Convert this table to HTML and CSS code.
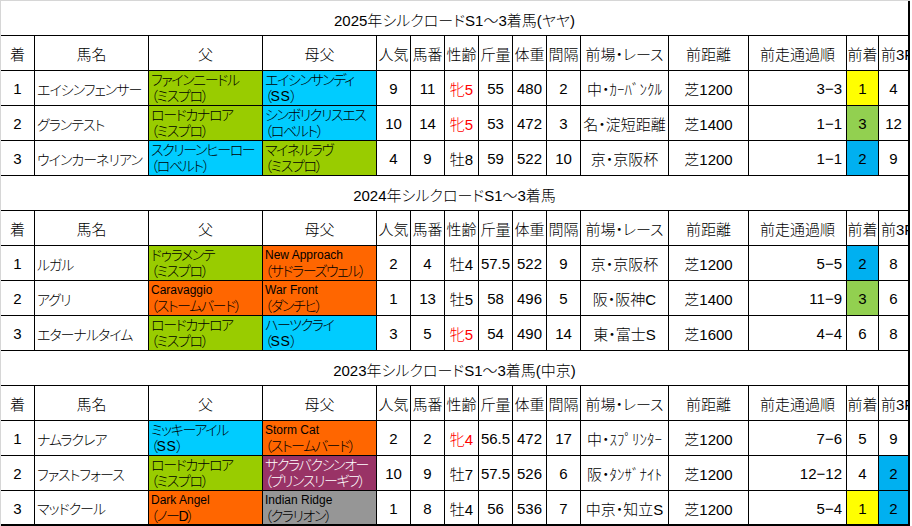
FILE: index.html
```html
<!DOCTYPE html>
<html lang="ja">
<head>
<meta charset="utf-8">
<title>シルクロードS</title>
<link rel="stylesheet" href="styles.css">
</head>
<body>
<div class="sheet">

  <section class="block">
    <div class="title">2025年シルクロードS1～3着馬(ヤヤ)</div>
    <div class="grid">
      <div class="c">着</div><div class="c">馬名</div><div class="c">父</div><div class="c">母父</div><div class="c">人気</div><div class="c">馬番</div><div class="c">性齢</div><div class="c">斤量</div><div class="c">体重</div><div class="c">間隔</div><div class="c">前場・レース</div><div class="c">前距離</div><div class="c">前走通過順</div><div class="c">前着</div><div class="c last clip">前3F</div>

      <div class="c">1</div><div class="c name">エイシンフェンサー</div>
      <div class="c sire green"><span>ファインニードル</span><span>（ミスプロ）</span></div>
      <div class="c sire cyan"><span>エイシンサンディ</span><span>（<span class="lat">SS</span>）</span></div>
      <div class="c">9</div><div class="c">11</div><div class="c red">牝5</div><div class="c">55</div><div class="c">480</div><div class="c">2</div><div class="c">中・ｶｰﾊﾞﾝｸﾙ</div><div class="c">芝1200</div><div class="c pass">3−3</div><div class="c y">1</div><div class="c last">4</div>

      <div class="c">2</div><div class="c name">グランテスト</div>
      <div class="c sire green"><span>ロードカナロア</span><span>（ミスプロ）</span></div>
      <div class="c sire cyan"><span>シンボリクリスエス</span><span>（ロベルト）</span></div>
      <div class="c">10</div><div class="c">14</div><div class="c red">牝5</div><div class="c">53</div><div class="c">472</div><div class="c">3</div><div class="c">名・淀短距離</div><div class="c">芝1400</div><div class="c pass">1−1</div><div class="c g3">3</div><div class="c last">12</div>

      <div class="c">3</div><div class="c name">ウインカーネリアン</div>
      <div class="c sire cyan"><span>スクリーンヒーロー</span><span>（ロベルト）</span></div>
      <div class="c sire green"><span>マイネルラヴ</span><span>（ミスプロ）</span></div>
      <div class="c">4</div><div class="c">9</div><div class="c">牡8</div><div class="c">59</div><div class="c">522</div><div class="c">10</div><div class="c">京・京阪杯</div><div class="c">芝1200</div><div class="c pass">1−1</div><div class="c b2">2</div><div class="c last">9</div>
    </div>
  </section>

  <section class="block">
    <div class="title">2024年シルクロードS1～3着馬</div>
    <div class="grid">
      <div class="c">着</div><div class="c">馬名</div><div class="c">父</div><div class="c">母父</div><div class="c">人気</div><div class="c">馬番</div><div class="c">性齢</div><div class="c">斤量</div><div class="c">体重</div><div class="c">間隔</div><div class="c">前場・レース</div><div class="c">前距離</div><div class="c">前走通過順</div><div class="c">前着</div><div class="c last clip">前3F</div>

      <div class="c">1</div><div class="c name">ルガル</div>
      <div class="c sire green"><span>ドゥラメンテ</span><span>（ミスプロ）</span></div>
      <div class="c sire orange"><span class="en">New Approach</span><span>（サドラーズウェル）</span></div>
      <div class="c">2</div><div class="c">4</div><div class="c">牡4</div><div class="c">57.5</div><div class="c">522</div><div class="c">9</div><div class="c">京・京阪杯</div><div class="c">芝1200</div><div class="c pass">5−5</div><div class="c b2">2</div><div class="c last">8</div>

      <div class="c">2</div><div class="c name">アグリ</div>
      <div class="c sire orange"><span class="en">Caravaggio</span><span>（ストームバード）</span></div>
      <div class="c sire orange"><span class="en">War Front</span><span>（ダンチヒ）</span></div>
      <div class="c">1</div><div class="c">13</div><div class="c">牡5</div><div class="c">58</div><div class="c">496</div><div class="c">5</div><div class="c">阪・阪神C</div><div class="c">芝1400</div><div class="c pass">11−9</div><div class="c g3">3</div><div class="c last">6</div>

      <div class="c">3</div><div class="c name">エターナルタイム</div>
      <div class="c sire green"><span>ロードカナロア</span><span>（ミスプロ）</span></div>
      <div class="c sire cyan"><span>ハーツクライ</span><span>（<span class="lat">SS</span>）</span></div>
      <div class="c">3</div><div class="c">5</div><div class="c red">牝5</div><div class="c">54</div><div class="c">490</div><div class="c">14</div><div class="c">東・富士S</div><div class="c">芝1600</div><div class="c pass">4−4</div><div class="c">6</div><div class="c last">8</div>
    </div>
  </section>

  <section class="block end">
    <div class="title">2023年シルクロードS1～3着馬(中京)</div>
    <div class="grid">
      <div class="c">着</div><div class="c">馬名</div><div class="c">父</div><div class="c">母父</div><div class="c">人気</div><div class="c">馬番</div><div class="c">性齢</div><div class="c">斤量</div><div class="c">体重</div><div class="c">間隔</div><div class="c">前場・レース</div><div class="c">前距離</div><div class="c">前走通過順</div><div class="c">前着</div><div class="c last clip">前3F</div>

      <div class="c">1</div><div class="c name">ナムラクレア</div>
      <div class="c sire cyan"><span>ミッキーアイル</span><span>（<span class="lat">SS</span>）</span></div>
      <div class="c sire orange"><span class="en">Storm Cat</span><span>（ストームバード）</span></div>
      <div class="c">2</div><div class="c">2</div><div class="c red">牝4</div><div class="c">56.5</div><div class="c">472</div><div class="c">17</div><div class="c">中・ｽﾌﾟﾘﾝﾀｰ</div><div class="c">芝1200</div><div class="c pass">7−6</div><div class="c">5</div><div class="c last">9</div>

      <div class="c">2</div><div class="c name">ファストフォース</div>
      <div class="c sire green"><span>ロードカナロア</span><span>（ミスプロ）</span></div>
      <div class="c sire purple"><span>サクラバクシンオー</span><span>（プリンスリーギフ）</span></div>
      <div class="c">10</div><div class="c">9</div><div class="c">牡7</div><div class="c">57.5</div><div class="c">526</div><div class="c">6</div><div class="c">阪・ﾀﾝｻﾞﾅｲﾄ</div><div class="c">芝1200</div><div class="c pass">12−12</div><div class="c">4</div><div class="c last b2">2</div>

      <div class="c">3</div><div class="c name">マッドクール</div>
      <div class="c sire orange"><span class="en">Dark Angel</span><span>（ノーD）</span></div>
      <div class="c sire gray"><span class="en">Indian Ridge</span><span>（クラリオン）</span></div>
      <div class="c">1</div><div class="c">8</div><div class="c">牡4</div><div class="c">56</div><div class="c">536</div><div class="c">7</div><div class="c">中京・知立S</div><div class="c">芝1200</div><div class="c pass">5−4</div><div class="c y">1</div><div class="c last b2">2</div>
    </div>
  </section>

</div>
</body>
</html>
```

FILE: styles.css
```css
html, body {
  margin: 0;
  padding: 0;
  background: #ffffff;
}

body {
  font-family: "Liberation Sans", "Noto Sans CJK JP", sans-serif;
  font-size: 15px;
  font-weight: 300;
  color: #000000;
  font-feature-settings: "palt";
}

.sheet {
  width: 909px;
  border-top: 1px solid #d6d6d6;
  border-left: 1px solid #d6d6d6;
}

.block {
  border-right: 2px solid #000000;
}

.block.end .grid > .c:nth-last-child(-n+15) {
  border-bottom-width: 2px;
}

.title {
  height: 35px;
  box-sizing: border-box;
  border-bottom: 1px solid #000000;
  display: flex;
  align-items: center;
  justify-content: center;
  padding-top: 3px;
  white-space: nowrap;
}

.grid {
  display: grid;
  grid-template-columns: 34px 114px 114px 114px 34px 34px 34px 34px 34px 34px 88px 80px 98px 32px 29px;
  grid-auto-rows: 35px;
}

.c {
  box-sizing: border-box;
  border-right: 1px solid #000000;
  border-bottom: 1px solid #000000;
  display: flex;
  align-items: center;
  justify-content: center;
  white-space: nowrap;
  overflow: hidden;
  padding-top: 1px;
}

.c.last {
  border-right: none;
}

.c.clip {
  justify-content: flex-start;
  padding-left: 2px;
}

.c.name {
  justify-content: flex-start;
  padding-left: 2px;
  font-size: 14px;
  letter-spacing: -1px;
}

.c.pass {
  justify-content: flex-end;
  padding-right: 4px;
}

.c.sire {
  flex-direction: column;
  align-items: flex-start;
  justify-content: center;
  padding-left: 2px;
  padding-top: 0;
  font-size: 14px;
  line-height: 16px;
  letter-spacing: -1.4px;
}

.sire .en {
  font-size: 12px;
  letter-spacing: 0;
}

.sire .lat {
  letter-spacing: 0.5px;
}

.red { color: #ff0000; }

.green { background: #99cc00; }
.cyan { background: #00ccff; }
.orange { background: #ff6600; }
.purple { background: #993366; color: #ffffff; }
.gray { background: #969696; }

.y { background: #ffff00; }
.g3 { background: #92d050; }
.b2 { background: #00b0f0; }
```
